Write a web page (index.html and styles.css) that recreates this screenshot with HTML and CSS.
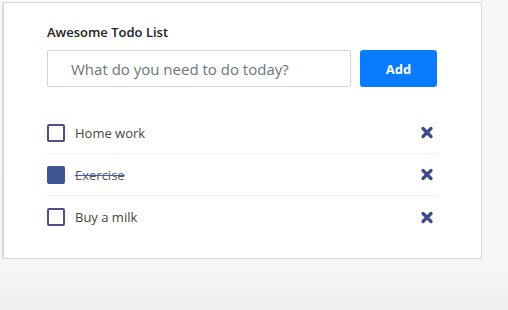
FILE: index.html
```html
<!DOCTYPE html>
<html>
<head>
  <title>Awesome Todo List</title>
  <meta charset="UTF-8" />
  <link rel="stylesheet" href="styles.css">
</head>
<body>

  <div class="card">
    <!-- Title -->
    <h1 class="title">Awesome Todo List</h1>

    <!-- New todo form -->
    <form class="add-form">
      <input type="text" class="todo-input" placeholder="What do you need to do today?">
      <button type="button" class="add-btn">Add</button>
    </form>

    <!-- Todo items -->
    <ul class="todo-list">
      <li class="todo-item">
        <span class="check"></span>
        <span class="todo-text">Home work</span>
        <svg class="remove" width="14" height="13" viewBox="0 0 14 13"><path d="M3 2.5L11 10.5M11 2.5L3 10.5" stroke="#3c4c8a" stroke-width="3.3" stroke-linecap="round"/></svg>
      </li>
      <li class="todo-item done">
        <span class="check"></span>
        <span class="todo-text">Exercise</span>
        <svg class="remove" width="14" height="13" viewBox="0 0 14 13"><path d="M3 2.5L11 10.5M11 2.5L3 10.5" stroke="#3c4c8a" stroke-width="3.3" stroke-linecap="round"/></svg>
      </li>
      <li class="todo-item">
        <span class="check"></span>
        <span class="todo-text">Buy a milk</span>
        <svg class="remove" width="14" height="13" viewBox="0 0 14 13"><path d="M3 2.5L11 10.5M11 2.5L3 10.5" stroke="#3c4c8a" stroke-width="3.3" stroke-linecap="round"/></svg>
      </li>
    </ul>
  </div>

</body>
</html>
```

FILE: styles.css
```css
/* Page */
body {
  margin: 0;
  height: 310px;
  font-family: "Open Sans", sans-serif;
  background: linear-gradient(#f6f7f9 0%, #f5f6f8 88%, #edeef0 100%);
}

/* White card */
.card {
  margin: 2px 0 0 2px;
  width: 390px;
  padding: 18px 44px 20px 43px;
  background: #fff;
  border: 1px solid #d7d9dd;
  border-left-width: 2px;
}

.title {
  margin: 0 0 7px 0;
  font-size: 13px;
  font-weight: 600;
  line-height: 22px;
  color: #222;
}

/* Input + button row */
.add-form {
  display: flex;
  gap: 9px;
  margin: 0;
}

.todo-input {
  width: 304px;
  height: 37px;
  box-sizing: border-box;
  padding: 0 23px;
  border: 1px solid #d4d4d4;
  border-radius: 1px;
  font-family: "Open Sans", sans-serif;
  font-size: 15px;
  color: #495057;
}

.todo-input::placeholder {
  color: #6c757d;
}

.add-btn {
  width: 77px;
  height: 37px;
  border: none;
  border-radius: 3px;
  background: #087bfe;
  color: #fff;
  font-family: "Open Sans", sans-serif;
  font-size: 13px;
  font-weight: 700;
}

/* List */
.todo-list {
  list-style: none;
  margin: 25px 0 0 0;
  padding: 0;
  width: 390px;
}

.todo-item {
  display: flex;
  align-items: center;
  height: 42px;
  border-bottom: 1px solid #f1f1f3;
  box-sizing: border-box;
}

.todo-item:last-child {
  border-bottom: none;
}

.check {
  width: 18px;
  height: 18px;
  box-sizing: border-box;
  border: 2px solid #4b4f85;
  border-radius: 2px;
  margin-right: 10px;
}

.todo-text {
  flex: 1;
  font-size: 13px;
  color: #454545;
}

.done .check {
  background: #3e5494;
  border-color: #3e5494;
}

.done .todo-text {
  text-decoration: line-through;
  text-decoration-color: #3a64a8;
  color: #555;
}

.remove {
  margin-right: 3px;
}
```
